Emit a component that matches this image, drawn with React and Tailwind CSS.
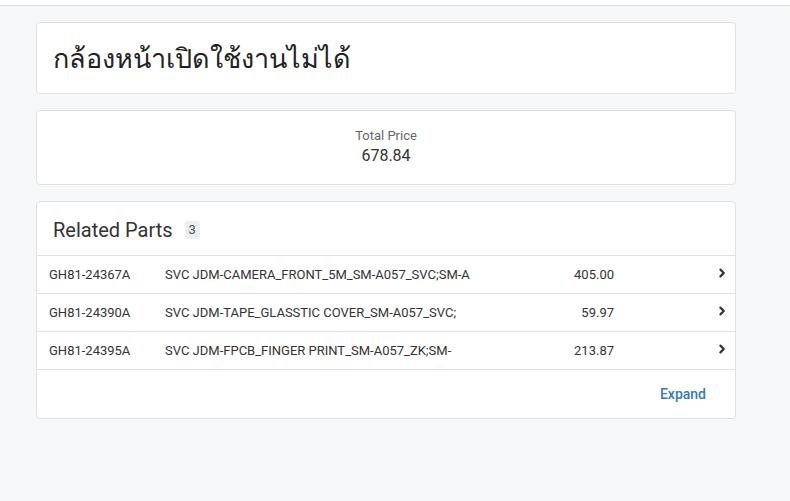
const parts = [
  { code: 'GH81-24367A', name: 'SVC JDM-CAMERA_FRONT_5M_SM-A057_SVC;SM-A', price: '405.00' },
  { code: 'GH81-24390A', name: 'SVC JDM-TAPE_GLASSTIC COVER_SM-A057_SVC;', price: '59.97' },
  { code: 'GH81-24395A', name: 'SVC JDM-FPCB_FINGER PRINT_SM-A057_ZK;SM-', price: '213.87' },
];

function Chevron() {
  return (
    <svg className="w-[10px] h-[10px] text-[#333]" viewBox="0 0 10 10" fill="none" stroke="currentColor">
      <path d="M3.4 1.6L6.8 5 3.4 8.4" strokeWidth={2.2} strokeLinecap="round" strokeLinejoin="round" />
    </svg>
  );
}

export default function App() {
  return (
    <div className="min-h-[501px] bg-[#f7f8fa] font-['Roboto','Noto_Sans',sans-serif] text-[#333]">
      {/* Top bar */}
      <div className="h-[6px] bg-white border-b border-[#dcdfe3]" />

      <main className="w-[700px] ml-[36px] pt-4 flex flex-col gap-4">
        {/* Title */}
        <div className="h-[72px] bg-white border border-[#dfe1e5] rounded-[4px] px-4 flex items-center">
          <h1 className="text-[27px] leading-none text-[#222] pt-[3px]">กล้องหน้าเปิดใช้งานไม่ได้</h1>
        </div>

        {/* Total */}
        <div className="h-[75px] bg-white border border-[#dfe1e5] rounded-[4px] flex flex-col items-center pt-[17px]">
          <div className="text-[13px] text-[#666] leading-4">Total Price</div>
          <div className="text-[16px] text-[#333] leading-5 mt-[2px]">678.84</div>
        </div>

        {/* Related parts */}
        <div className="bg-white border border-[#dfe1e5] rounded-[4px]">
          <div className="h-[54px] px-4 flex items-center gap-3 border-b border-[#dfe1e5]">
            <span className="text-[20px] text-[#333] pt-[2px]">Related Parts</span>
            <span className="text-[13px] text-[#555] bg-[#eceef0] rounded-[3px] px-[4px] leading-[18px] mt-[2px]">3</span>
          </div>
          {parts.map((p) => (
            <div key={p.code} className="h-[38px] flex items-center text-[13px] text-[#333] border-b border-[#dfe1e5]">
              <span className="w-[128px] pl-3 shrink-0">{p.code}</span>
              <span className="w-[350px] shrink-0 truncate">{p.name}</span>
              <span className="w-[99px] text-right shrink-0">{p.price}</span>
              <span className="ml-auto pr-[8px] pb-[4px]"><Chevron /></span>
            </div>
          ))}
          <div className="h-[48px] flex items-center justify-end pr-[29px]">
            <button className="text-[14px] font-medium text-[#337ab7]">Expand</button>
          </div>
        </div>
      </main>
    </div>
  );
}
